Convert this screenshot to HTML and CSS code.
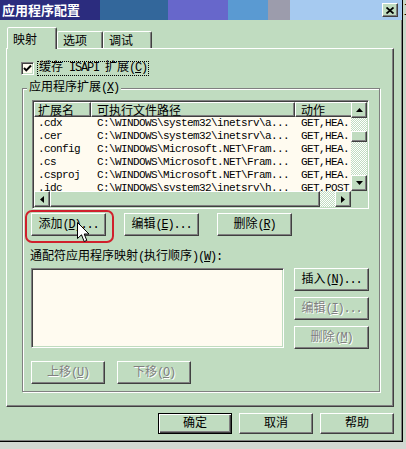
FILE: index.html
```html
<!DOCTYPE html>
<html lang="zh-CN">
<head>
    <meta charset="UTF-8">
    <meta name="viewport" content="width=device-width, initial-scale=1.0">
    <title>应用程序配置</title>
    <link rel="stylesheet" href="styles.css">
</head>
<body>
    <div class="screen">
        <div class="dialog">
            <div class="titlebar">
                <span class="title">应用程序配置</span>
                <span class="close-btn">
                    <svg width="8" height="7" viewBox="0 0 8 7"><path d="M0.5 0.5 L7.5 6.5 M7.5 0.5 L0.5 6.5" stroke="#000" stroke-width="1.8"/></svg>
                </span>
            </div>

            <div class="tabs">
                <div class="tab active">映射</div>
                <div class="tab tab-options">选项</div>
                <div class="tab tab-debug">调试</div>
            </div>

            <div class="panel">
                <div class="check-row">
                    <span class="checkbox">
                        <svg width="9" height="9" viewBox="0 0 9 9"><path d="M1 4 L3.3 6.4 L8 1.5" fill="none" stroke="#000" stroke-width="2"/></svg>
                    </span>
                    <span class="focus-label">缓存<span class="en"> ISAPI </span>扩展<span class="en">(<u>C</u>)</span></span>
                </div>

                <div class="group">
                    <div class="group-title">应用程序扩展<span class="en">(<u>X</u>)</span></div>

                    <div class="listview">
                        <div class="lv-main">
                            <div class="lv-head">
                                <div class="col1">扩展名</div>
                                <div class="col2">可执行文件路径</div>
                                <div class="col3">动作</div>
                            </div>
                            <div class="lv-body">
                                <div class="lv-row"><span class="col1">.cdx</span><span class="col2">C:\WINDOWS\system32\inetsrv\a...</span><span class="col3">GET,HEA...</span></div>
                                <div class="lv-row"><span class="col1">.cer</span><span class="col2">C:\WINDOWS\system32\inetsrv\a...</span><span class="col3">GET,HEA...</span></div>
                                <div class="lv-row"><span class="col1">.config</span><span class="col2">C:\WINDOWS\Microsoft.NET\Fram...</span><span class="col3">GET,HEA...</span></div>
                                <div class="lv-row"><span class="col1">.cs</span><span class="col2">C:\WINDOWS\Microsoft.NET\Fram...</span><span class="col3">GET,HEA...</span></div>
                                <div class="lv-row"><span class="col1">.csproj</span><span class="col2">C:\WINDOWS\Microsoft.NET\Fram...</span><span class="col3">GET,HEA...</span></div>
                                <div class="lv-row"><span class="col1">.idc</span><span class="col2">C:\WINDOWS\system32\inetsrv\h...</span><span class="col3">GET,POST</span></div>
                            </div>
                        </div>
                        <div class="vscroll">
                            <span class="sb-btn"><svg width="7" height="4" viewBox="0 0 7 4"><path d="M3.5 0 L7 4 H0 Z"/></svg></span>
                            <span class="sb-track upper"></span>
                            <span class="sb-thumb"></span>
                            <span class="sb-track"></span>
                            <span class="sb-btn"><svg width="7" height="4" viewBox="0 0 7 4"><path d="M0 0 H7 L3.5 4 Z"/></svg></span>
                        </div>
                        <div class="hscroll">
                            <span class="sb-btn"><svg width="4" height="7" viewBox="0 0 4 7"><path d="M0 3.5 L4 0 V7 Z"/></svg></span>
                            <span class="sb-thumb wide"></span>
                            <span class="sb-track"></span>
                            <span class="sb-btn"><svg width="4" height="7" viewBox="0 0 4 7"><path d="M0 0 L4 3.5 L0 7 Z"/></svg></span>
                        </div>
                        <div class="sb-corner"></div>
                    </div>

                    <div class="btn-row">
                        <span class="marked">
                            <button class="btn">添加<span class="en">(<u>D</u>)...</span></button>
                            <svg class="cursor" width="13" height="21" viewBox="0 0 13 21"><path d="M0.5 0.5 V16.5 L4.5 12.8 L7.2 19.5 L9.8 18.4 L7.2 12 H12 Z" fill="#fff" stroke="#000" stroke-width="1"/></svg>
                        </span>
                        <button class="btn">编辑<span class="en">(<u>E</u>)...</span></button>
                        <button class="btn">删除<span class="en">(<u>R</u>)</span></button>
                    </div>

                    <div class="field-label">通配符应用程序映射<span class="en">(</span>执行顺序<span class="en">)(<u>W</u>):</span></div>

                    <div class="wildcard">
                        <div class="plain-list"></div>
                        <div class="side-buttons">
                            <button class="btn">插入<span class="en">(<u>N</u>)...</span></button>
                            <button class="btn" disabled>编辑<span class="en">(<u>I</u>)...</span></button>
                            <button class="btn" disabled>删除<span class="en">(<u>M</u>)</span></button>
                        </div>
                    </div>

                    <div class="move-row">
                        <button class="btn" disabled>上移<span class="en">(<u>U</u>)</span></button>
                        <button class="btn" disabled>下移<span class="en">(<u>O</u>)</span></button>
                    </div>
                </div>
            </div>

            <div class="footer">
                <button class="btn default">确定</button>
                <button class="btn">取消</button>
                <button class="btn">帮助</button>
            </div>
        </div>
        <div class="behind">互</div>
    </div>
</body>
</html>
```

FILE: styles.css
```css
* {
    box-sizing: border-box;
}
body {
    margin: 0;
    background: #d2d8d2;
    font-family: "Liberation Mono", "Noto Sans CJK SC", monospace;
    font-size: 12px;
    color: #000;
}
.screen {
    display: flex;
    width: 406px;
    height: 449px;
    overflow: hidden;
}
.dialog {
    flex: none;
    width: 403px;
    height: 442px;
    background: #c0dcc0;
    border-right: 1px solid #000;
    border-bottom: 1px solid #000;
    box-shadow: inset -1px -1px 0 #808080;
}
.behind {
    flex: 1;
    height: 442px;
    overflow: hidden;
    padding: 3px 0 0 1px;
    background: #c8d8c8;
    font-family: "Noto Sans CJK SC", sans-serif;
    line-height: 12px;
}
.en {
    letter-spacing: -1.2px;
}

/* title bar */
.titlebar {
    display: flex;
    align-items: center;
    justify-content: space-between;
    height: 20px;
    padding: 0 4px 0 2px;
    background: linear-gradient(to right,
        #2b2c7e 0, #2b2c7e 100px,
        #33679b 100px, #33679b 168px,
        #6767cb 168px, #6767cb 228px,
        #5a9ad2 228px, #5a9ad2 268px,
        #9c9cac 268px, #9c9cac 290px,
        #a6caf0 290px);
}
.title {
    color: #fff;
    font-family: "Noto Sans CJK SC", sans-serif;
    font-weight: bold;
    font-size: 13px;
    line-height: 14px;
}
.close-btn {
    display: flex;
    align-items: center;
    justify-content: center;
    width: 16px;
    height: 14px;
    background: #c0dcc0;
    border: 1px solid;
    border-color: #fff #404040 #404040 #fff;
    box-shadow: inset -1px -1px 0 #808080;
}

/* tabs */
.tabs {
    display: flex;
    align-items: flex-end;
    height: 21px;
    margin-top: 7px;
    padding-left: 7px;
}
.tab {
    height: 17px;
    padding-left: 5px;
    border: 1px solid;
    border-bottom: 0;
    border-color: #fff #404040 transparent #fff;
    border-radius: 2px 2px 0 0;
    box-shadow: inset -1px 0 0 #808080;
    font-family: "Noto Sans CJK SC", sans-serif;
    line-height: 15px;
}
.tab.active {
    position: relative;
    width: 50px;
    height: 22px;
    margin-bottom: -1px;
    background: #c0dcc0;
    line-height: 21px;
}
.tab-options {
    width: 46px;
}
.tab-debug {
    width: 49px;
}
.panel {
    width: 388px;
    height: 359px;
    margin-left: 6px;
    border: 1px solid;
    border-color: #fff #404040 #404040 #fff;
    box-shadow: inset -1px -1px 0 #808080;
}

/* checkbox */
.check-row {
    display: flex;
    align-items: center;
    height: 15px;
    margin: 12px 0 0 14px;
}
.checkbox {
    display: flex;
    align-items: center;
    justify-content: center;
    width: 13px;
    height: 13px;
    background: #fffbf0;
    border: 1px solid;
    border-color: #808080 #fff #fff #808080;
    box-shadow: inset 1px 1px 0 #404040, inset -1px -1px 0 #c0dcc0;
}
.focus-label {
    margin-left: 3px;
    padding: 0 1px;
    border: 1px dotted #000;
    line-height: 13px;
}

/* group box */
.group {
    width: 358px;
    margin: 12px 0 0 15px;
    padding-bottom: 7px;
    border: 1px solid #808080;
    box-shadow: 1px 1px 0 #fff, inset 1px 1px 0 #fff;
}
.group-title {
    display: table;
    margin: -7px 0 0 4px;
    padding: 0 2px;
    line-height: 12px;
    background: #c0dcc0;
}

/* list view */
.listview {
    display: grid;
    grid-template-columns: 1fr 16px;
    grid-template-rows: 1fr 16px;
    width: 337px;
    height: 109px;
    margin: 6px 0 0 9px;
    padding: 1px;
    background: #fffbf0;
    border: 1px solid;
    border-color: #808080 #fff #fff #808080;
    box-shadow: inset 1px 1px 0 #404040, inset -1px -1px 0 #c0dcc0;
}
.lv-main {
    overflow: hidden;
}
.lv-head {
    display: flex;
    height: 15px;
}
.lv-head div {
    flex: none;
    padding-left: 5px;
    background: #c0dcc0;
    border: 1px solid;
    border-color: #fff #404040 #404040 #fff;
    box-shadow: inset -1px -1px 0 #808080;
    font-family: "Noto Sans CJK SC", sans-serif;
    line-height: 13px;
}
.lv-head .col1 {
    padding-left: 3px;
}
.lv-body {
    height: 74px;
    overflow: hidden;
}
.lv-row {
    display: flex;
    height: 13px;
    font-size: 11px;
    letter-spacing: -0.6px;
    line-height: 13px;
    white-space: nowrap;
}
.lv-row span {
    flex: none;
    overflow: hidden;
    padding-left: 6px;
}
.lv-row .col1 {
    padding-left: 4px;
}
.col1 {
    width: 57px;
}
.col2 {
    width: 204px;
}
.col3 {
    width: 60px;
}

/* scroll bars */
.vscroll {
    display: flex;
    flex-direction: column;
}
.hscroll {
    display: flex;
}
.sb-btn,
.sb-thumb {
    flex: none;
    display: flex;
    align-items: center;
    justify-content: center;
    width: 16px;
    height: 16px;
    background: #c0dcc0;
    border: 1px solid;
    border-color: #fff #404040 #404040 #fff;
    box-shadow: inset -1px -1px 0 #808080;
}
.vscroll .sb-thumb {
    height: 11px;
}
.sb-thumb.wide {
    width: 270px;
}
.sb-track {
    flex: 1;
    background: repeating-conic-gradient(#fff 0 25%, #c0dcc0 0 50%) 0 0 / 2px 2px;
}
.sb-track.upper {
    flex: none;
    height: 13px;
}
.sb-corner {
    background: #c0dcc0;
}

/* buttons */
.btn {
    flex: none;
    display: flex;
    align-items: center;
    justify-content: center;
    width: 75px;
    height: 23px;
    padding: 0;
    font: inherit;
    line-height: 12px;
    color: #000;
    background: #c0dcc0;
    border: 1px solid;
    border-color: #fff #404040 #404040 #fff;
    box-shadow: inset -1px -1px 0 #808080;
}
.btn:disabled {
    color: #808080;
    text-shadow: 1px 1px 0 #fff;
}
.btn.default {
    border-color: #000;
    box-shadow: inset 1px 1px 0 #fff, inset -1px -1px 0 #404040, inset -2px -2px 0 #808080;
}
.btn-row {
    display: flex;
    gap: 18px;
    margin: 4px 0 0 8px;
}
.marked {
    position: relative;
    display: flex;
}
.marked::before {
    content: "";
    position: absolute;
    left: -6px;
    top: -3px;
    width: 85px;
    height: 29px;
    border: 2px solid #d0202c;
    border-radius: 7px;
}
.cursor {
    position: absolute;
    left: 46px;
    top: 9px;
}
.field-label {
    margin: 15px 0 0 7px;
    line-height: 12px;
}
.wildcard {
    display: flex;
    margin: 5px 0 0 8px;
}
.plain-list {
    width: 253px;
    height: 80px;
    background: #fffbf0;
    border: 1px solid;
    border-color: #808080 #fff #fff #808080;
    box-shadow: inset 1px 1px 0 #404040, inset -1px -1px 0 #c0dcc0;
}
.side-buttons {
    display: flex;
    flex-direction: column;
    gap: 6px;
    margin-left: 10px;
}
.move-row {
    display: flex;
    gap: 12px;
    margin: 12px 0 0 8px;
}
.move-row .btn {
    width: 74px;
}
.footer {
    display: flex;
    justify-content: flex-end;
    gap: 7px;
    margin-top: 6px;
    padding-right: 8px;
}
.footer .btn {
    width: 74px;
    height: 21px;
}
```
